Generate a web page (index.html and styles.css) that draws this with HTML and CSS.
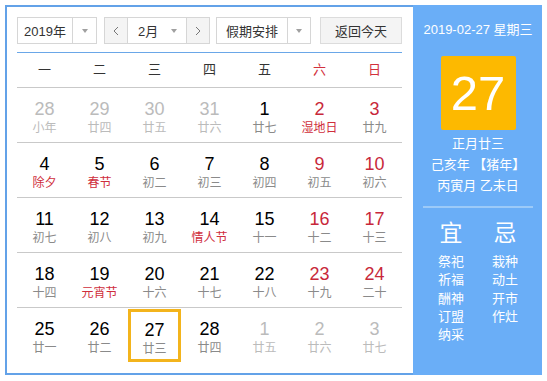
FILE: index.html
```html
<!DOCTYPE html>
<html lang="zh-CN">
<head>
    <meta charset="UTF-8">
    <title>万年历</title>
    <link rel="stylesheet" href="styles.css">
</head>
<body>
    <div class="calendar">
        <div class="main">
            <div class="toolbar">
                <div class="select year">
                    <span class="select-text">2019年</span>
                    <span class="select-arrow"><i class="caret"></i></span>
                </div>
                <div class="month-group">
                    <span class="nav">
                        <svg width="8" height="10" viewBox="0 0 8 10"><polyline points="6,1 2,5 6,9" fill="none" stroke="#777" stroke-width="1"/></svg>
                    </span>
                    <span class="month">2月<i class="caret"></i></span>
                    <span class="nav">
                        <svg width="8" height="10" viewBox="0 0 8 10"><polyline points="2,1 6,5 2,9" fill="none" stroke="#777" stroke-width="1"/></svg>
                    </span>
                </div>
                <div class="select holiday">
                    <span class="select-text">假期安排</span>
                    <span class="select-arrow"><i class="caret"></i></span>
                </div>
                <div class="btn-today">返回今天</div>
            </div>

            <div class="weekdays">
                <span>一</span><span>二</span><span>三</span><span>四</span><span>五</span>
                <span class="red">六</span><span class="red">日</span>
            </div>

            <div class="week">
                <div class="day other"><b>28</b><small>小年</small></div>
                <div class="day other"><b>29</b><small>廿四</small></div>
                <div class="day other"><b>30</b><small>廿五</small></div>
                <div class="day other"><b>31</b><small>廿六</small></div>
                <div class="day"><b>1</b><small>廿七</small></div>
                <div class="day weekend"><b>2</b><small class="fest">湿地日</small></div>
                <div class="day weekend"><b>3</b><small>廿九</small></div>
            </div>
            <div class="week">
                <div class="day"><b>4</b><small class="fest">除夕</small></div>
                <div class="day"><b>5</b><small class="fest">春节</small></div>
                <div class="day"><b>6</b><small>初二</small></div>
                <div class="day"><b>7</b><small>初三</small></div>
                <div class="day"><b>8</b><small>初四</small></div>
                <div class="day weekend"><b>9</b><small>初五</small></div>
                <div class="day weekend"><b>10</b><small>初六</small></div>
            </div>
            <div class="week">
                <div class="day"><b>11</b><small>初七</small></div>
                <div class="day"><b>12</b><small>初八</small></div>
                <div class="day"><b>13</b><small>初九</small></div>
                <div class="day"><b>14</b><small class="fest">情人节</small></div>
                <div class="day"><b>15</b><small>十一</small></div>
                <div class="day weekend"><b>16</b><small>十二</small></div>
                <div class="day weekend"><b>17</b><small>十三</small></div>
            </div>
            <div class="week">
                <div class="day"><b>18</b><small>十四</small></div>
                <div class="day"><b>19</b><small class="fest">元宵节</small></div>
                <div class="day"><b>20</b><small>十六</small></div>
                <div class="day"><b>21</b><small>十七</small></div>
                <div class="day"><b>22</b><small>十八</small></div>
                <div class="day weekend"><b>23</b><small>十九</small></div>
                <div class="day weekend"><b>24</b><small>二十</small></div>
            </div>
            <div class="week last">
                <div class="day"><b>25</b><small>廿一</small></div>
                <div class="day"><b>26</b><small>廿二</small></div>
                <div class="day today"><b>27</b><small>廿三</small></div>
                <div class="day"><b>28</b><small>廿四</small></div>
                <div class="day other"><b>1</b><small>廿五</small></div>
                <div class="day other"><b>2</b><small>廿六</small></div>
                <div class="day other"><b>3</b><small>廿七</small></div>
            </div>
        </div>

        <div class="panel">
            <div class="panel-date">2019-02-27 星期三</div>
            <div class="big-day">27</div>
            <div class="lunar">
                <div>正月廿三</div>
                <div>己亥年 【猪年】</div>
                <div>丙寅月 乙未日</div>
            </div>
            <div class="divider"></div>
            <div class="yiji">
                <div class="yiji-col">
                    <div class="yiji-title">宜</div>
                    <div>祭祀</div>
                    <div>祈福</div>
                    <div>酬神</div>
                    <div>订盟</div>
                    <div>纳采</div>
                </div>
                <div class="yiji-col">
                    <div class="yiji-title">忌</div>
                    <div>栽种</div>
                    <div>动土</div>
                    <div>开市</div>
                    <div>作灶</div>
                </div>
            </div>
        </div>
    </div>
</body>
</html>
```

FILE: styles.css
```css
body {
    margin: 5px;
    font-family: "Liberation Sans", Arial, "Noto Sans CJK SC", sans-serif;
    background: #fff;
    color: #333;
}

.calendar {
    display: flex;
    width: 538px;
    height: 370px;
}

.main {
    width: 385px;
    padding: 10px 11px 0 10px;
    border: 2px solid #63a2e8;
    border-right: none;
}

.toolbar {
    display: flex;
    align-items: center;
    height: 27px;
    font-size: 13px;
}

.select {
    display: flex;
    height: 25px;
    border: 1px solid #d6d6d6;
    background: #fff;
}

.select-text {
    display: flex;
    align-items: center;
    justify-content: center;
    border-right: 1px solid #d6d6d6;
}

.select-arrow {
    display: flex;
    align-items: center;
    justify-content: center;
    flex: 1;
}

.caret {
    display: inline-block;
    width: 0;
    height: 0;
    border-left: 3.5px solid transparent;
    border-right: 3.5px solid transparent;
    border-top: 4px solid #a0a0a0;
}

.year {
    width: 78px;
}

.year .select-text {
    width: 54px;
}

.month-group {
    display: flex;
    height: 25px;
    width: 104px;
    margin-left: 7px;
    border: 1px solid #d6d6d6;
}

.nav {
    display: flex;
    align-items: center;
    justify-content: center;
    width: 22px;
    background: #f4f4f4;
}

.month {
    display: flex;
    align-items: center;
    justify-content: space-between;
    flex: 1;
    padding: 0 9px 0 10px;
    border-left: 1px solid #d6d6d6;
    border-right: 1px solid #d6d6d6;
}

.holiday {
    width: 93px;
    margin-left: 6px;
}

.holiday .select-text {
    width: 70px;
}

.btn-today {
    display: flex;
    align-items: center;
    justify-content: center;
    height: 25px;
    width: 80px;
    margin-left: auto;
    border: 1px solid #dcdcdc;
    background: #f4f4f4;
}

.weekdays {
    display: grid;
    grid-template-columns: repeat(7, 55px);
    height: 34px;
    margin-top: 8px;
    border-top: 1px solid #6aa7e8;
    border-bottom: 1px solid #c9c9c9;
    font-size: 13px;
    line-height: 34px;
    text-align: center;
}

.red {
    color: #d2303c;
}

.week {
    display: grid;
    grid-template-columns: repeat(7, 55px);
    height: 54px;
    border-bottom: 1px solid #c9c9c9;
}

.week.last {
    border-bottom: none;
}

.day {
    display: flex;
    flex-direction: column;
    align-items: center;
    padding-top: 11px;
    box-sizing: border-box;
}

.day b {
    font-weight: normal;
    font-size: 18px;
    line-height: 20px;
    color: #000;
}

.day small {
    margin-top: 1px;
    font-size: 12px;
    line-height: 16px;
    color: #8a8a8a;
}

.day.weekend b {
    color: #c8283a;
}

.day small.fest {
    color: #cf2e3c;
}

.day.other b,
.day.other small {
    color: #bbbbbb;
}

.day.today {
    margin: 1px 1px 0 1px;
    padding-top: 8px;
    border: 3px solid #f3b41c;
}

.panel {
    display: flex;
    flex-direction: column;
    align-items: center;
    width: 130px;
    padding-top: 15px;
    background: #6aaef7;
    color: #fff;
    font-size: 13px;
}

.panel-date {
    line-height: 20px;
}

.big-day {
    width: 75px;
    height: 74px;
    margin-top: 16px;
    background: #fdb900;
    border-radius: 2px;
    font-size: 49px;
    line-height: 74px;
    text-align: center;
}

.lunar {
    margin-top: 3px;
    line-height: 21px;
    text-align: center;
}

.divider {
    width: 110px;
    height: 2px;
    margin-top: 10px;
    background: #9ccaf8;
}

.yiji {
    display: flex;
    gap: 28px;
    margin-top: 11px;
    line-height: 18.3px;
}

.yiji-col {
    width: 26px;
}

.yiji-title {
    font-size: 23px;
    line-height: 28px;
    margin-bottom: 6px;
    text-align: center;
}
```
